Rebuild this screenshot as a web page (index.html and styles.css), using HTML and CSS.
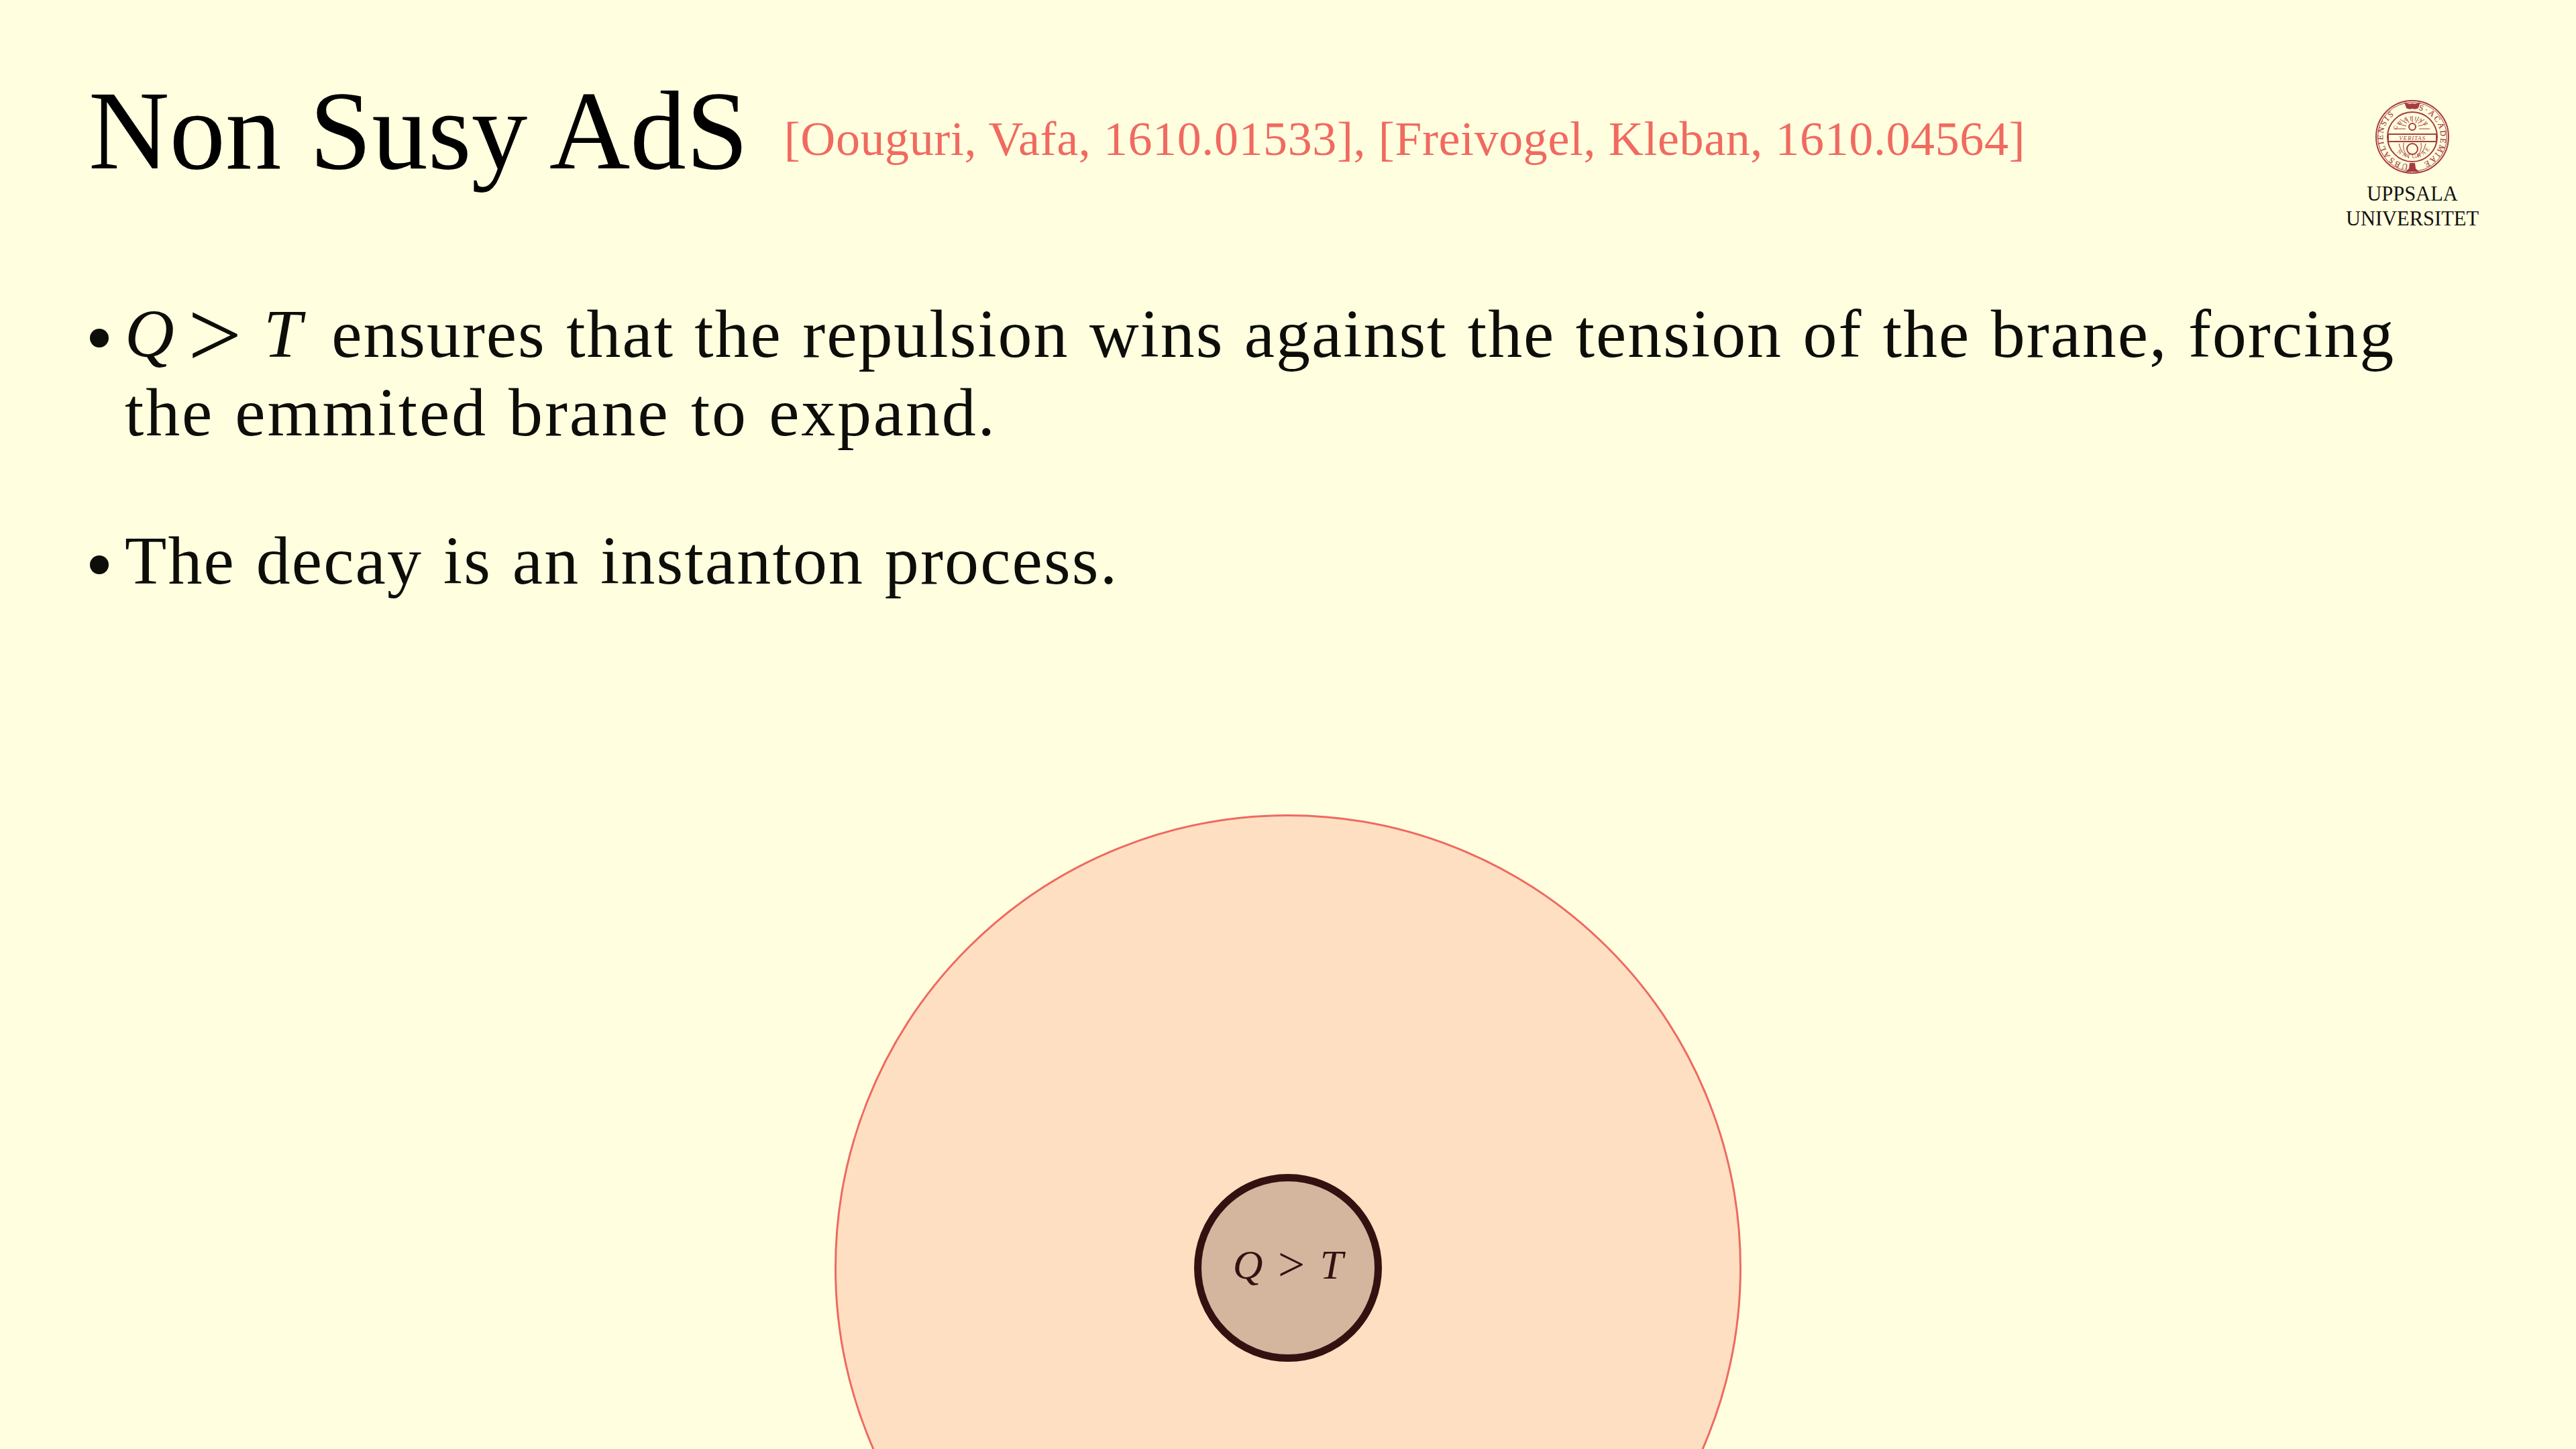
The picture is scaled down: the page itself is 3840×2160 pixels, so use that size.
FILE: index.html
```html
<!DOCTYPE html>
<html lang="en">
<head>
<meta charset="utf-8">
<title>Non Susy AdS</title>
<link rel="stylesheet" href="styles.css">
</head>
<body>
<main class="slide">
  <header class="head">
    <h1 class="title">Non Susy AdS</h1>
    <p class="refs">[Oouguri, Vafa, 1610.01533], [Freivogel, Kleban, 1610.04564]</p>
    <div class="logo">
      <svg class="seal" viewBox="0 0 112 112" aria-hidden="true">
        <defs>
          <path id="outerLeft" d="M50 97A41 41 0 0 1 45 16"/>
          <path id="outerRight" d="M65 16A41 41 0 0 1 62 97"/>
          <path id="innerTop" d="M31 48A27 27 0 0 1 81 48"/>
          <path id="innerBottom" d="M25 66A33 33 0 0 0 87 66"/>
        </defs>
        <circle class="ring heavy" cx="56" cy="56" r="54"/>
        <circle class="ring" cx="56" cy="56" r="51.500"/>
        <circle class="ring heavy" cx="56" cy="56" r="37"/>
        <text class="seal-text"><textPath href="#outerLeft">UBSALIENSIS</textPath></text>
        <text class="seal-text"><textPath href="#outerRight">S·ACADEMIAE</textPath></text>
        <text class="seal-small"><textPath href="#innerTop" startOffset="3%">GRATIAE</textPath></text>
        <text class="seal-small"><textPath href="#innerBottom" startOffset="19%">NATURAE</textPath></text>
        <g class="ring">
          <path class="heavy" d="M20 52H92V63H20z"/>
          <circle class="heavy" cx="56" cy="41" r="5"/>
          <path d="M46 44H30M47 40 33 36M48 36 38 30M51 35 46 26M56 34V25M61 35 66 26M64 36 74 30M65 40 79 36M66 44H82"/>
          <circle class="heavy" cx="56" cy="74" r="8"/>
          <path d="M36 66q3 15 15 21M43 65q-2 13 6 19M69 65q2 13-6 19M76 66q-3 15-15 21"/>
        </g>
        <path class="mark" d="M44 4q6 4 12 2 6 2 12-2l-3 9q-4 3-9 1-5 2-9-1zM52 95h8l1 8 5 5H46l5-5z"/>
        <text class="seal-band" x="56" y="60.500" text-anchor="middle">VERITAS</text>
      </svg>
      <p class="logo-text">UPPSALA<br>UNIVERSITET</p>
    </div>
  </header>

  <ul class="points">
    <li class="point first"><span class="bullet"></span><div><span class="line tight"><i class="m">Q</i> <span class="rel">&gt;</span> <i class="m tail">T</i> ensures that the repulsion wins against the tension of the brane, forcing</span><span class="line wide">the emmited brane to expand.</span></div></li>
    <li class="point second"><span class="bullet"></span><div><span class="line">The decay is an instanton process.</span></div></li>
  </ul>

  <section class="diagram">
    <div class="outer">
      <div class="inner"><i class="m">Q</i>&nbsp;<span class="rel">&gt;</span>&nbsp;<i class="m">T</i></div>
    </div>
  </section>
</main>
</body>
</html>
```
FILE: styles.css
```css
* { box-sizing: border-box; }
html, body { margin: 0; height: 2160px; overflow: hidden; }
body { background: #ffffdf; color: #0d0d0a; font-family: "Liberation Serif", serif; }
.slide { width: 3840px; height: 2160px; padding: 0 0 0 132px; overflow: hidden; display: flex; flex-direction: column; }

.head { flex: none; height: 439px; display: flex; align-items: flex-start; padding-top: 100px; }
.title { margin: 0; font-size: 167px; line-height: 190px; font-weight: 400; color: #000; white-space: nowrap; }
.refs { margin: 67px 0 0 53px; font-size: 72px; line-height: 80px; letter-spacing: .6px; color: #f06a60; white-space: nowrap; }
.logo { margin-left: auto; margin-right: 142px; margin-top: 48px; display: flex; flex-direction: column; align-items: center; width: 204px; }
.seal { width: 112px; height: 112px; display: block; }
.ring { fill: none; stroke: #a63c42; stroke-width: 1; }
.heavy { stroke-width: 2; }
.mark { fill: #a63c42; }
.seal-text { font-size: 12px; fill: #a63c42; letter-spacing: 2.200px; stroke: #a63c42; stroke-width: .2; }
.seal-small { font-size: 8.500px; fill: #a63c42; letter-spacing: 2.600px; }
.seal-band { font-size: 9px; font-style: italic; fill: #a63c42; letter-spacing: .8px; }
.logo-text { margin: 11px 0 0; font-size: 30.500px; line-height: 37px; text-align: center; color: #111; }

.points { flex: none; list-style: none; margin: 0; padding: 0; font-size: 102px; line-height: 117px; }
.point { display: flex; width: 3600px; }
.second { margin-top: 104px; }
.line { display: block; white-space: nowrap; letter-spacing: 2.140px; word-spacing: 3px; }
.tight { letter-spacing: 1.950px; }
.wide { letter-spacing: 2.800px; }
.bullet { flex: none; width: 28px; height: 28px; margin: 51px 24px 0 2px; border-radius: 50%; background: #0d0d0a; }
.m { font-style: italic; }
.tail { margin-right: 12px; }
.rel { font-size: 1.400em; line-height: 0; vertical-align: -.105em; margin: 0 0 0 -.084em; }

.diagram { flex: none; height: 1352px; display: flex; justify-content: center; margin-left: -132px; margin-top: 320px; }
.outer { flex: none; width: 1352px; height: 1352px; border-radius: 50%; background: #ffdfc2; border: 3px solid #ee6a60; display: grid; place-items: center; }
.inner { width: 280px; height: 280px; border-radius: 50%; background: #d4b59e; border: 11px solid #341111; color: #341111; display: flex; align-items: center; justify-content: center; font-size: 62px; line-height: 1; padding-bottom: 10px; white-space: nowrap; }
.inner .rel { font-size: 1.150em; vertical-align: -.04em; margin: 0 7px; }
```
